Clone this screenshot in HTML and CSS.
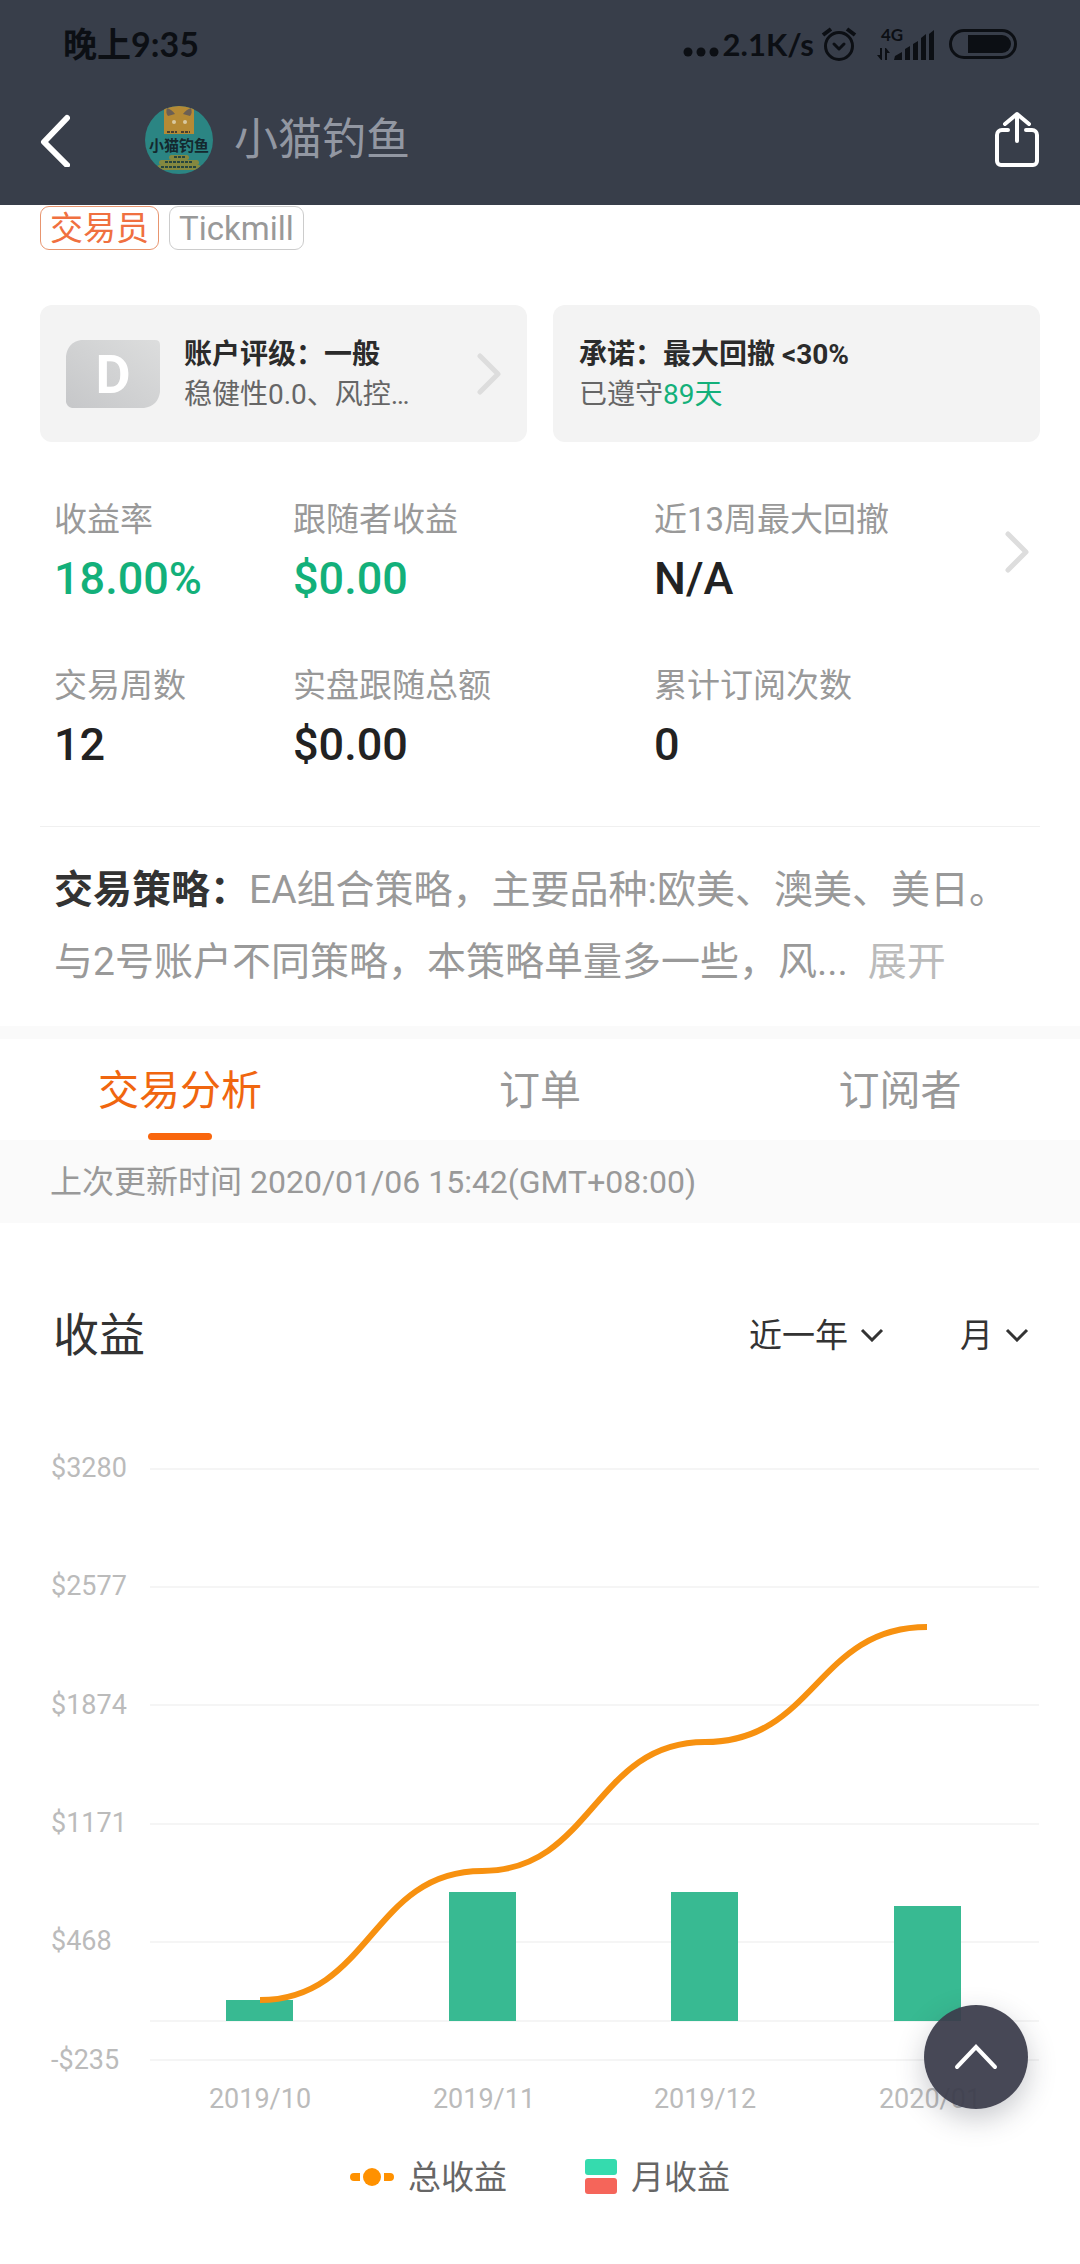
FILE: index.html
```html
<!DOCTYPE html>
<html lang="zh-CN">
<head>
<meta charset="utf-8">
<meta name="viewport" content="width=device-width, initial-scale=1">
<title>小猫钓鱼</title>
<link rel="stylesheet" href="styles.css">
</head>
<body>
<header class="top">
  <div class="status">
    <span class="status-time">晚上9:35</span>
    <div class="status-right">
      <svg class="icon" width="36" height="30" viewBox="0 0 36 30" aria-hidden="true"><g fill="#0c0f14"><circle cx="5" cy="23" r="4.5"/><circle cx="18" cy="23" r="4.5"/><circle cx="31" cy="23" r="4.5"/></g></svg>
      <span class="status-speed">2.1K/s</span>
      <svg class="icon" width="36" height="36" viewBox="0 0 36 36" fill="none" stroke="#0c0f14" aria-hidden="true"><circle cx="18" cy="20" r="13.5" stroke-width="3"/><path d="M13 18l5 5 5-5" stroke-width="3" stroke-linecap="round" stroke-linejoin="round"/><path d="M2 9l8-6M34 9l-8-6" stroke-width="4"/></svg>
      <svg class="icon icon-signal" width="58" height="44" viewBox="0 -5 58 44" aria-hidden="true"><g fill="#0c0f14"><text x="4" y="14" class="net">4G</text><path d="M3 21h2v12H4L0 28h3zM8 33V21h1l4 5h-3v7zM17 33l1-4 7-4v8zM28 33V22l5-3v14zM36 33V17l5-3v19zM44 33V11l5-4v26zM52 33V7l5-4v30z"/></g></svg>
      <svg class="icon icon-battery" width="68" height="32" viewBox="0 0 68 32" aria-hidden="true"><rect x="1.500" y="2.500" width="65" height="27" rx="13.500" fill="none" stroke="#0c0f14" stroke-width="3"/><path d="M19 7h34a9 9 0 0 1 0 18H19z" fill="#0c0f14"/></svg>
    </div>
  </div>
  <nav class="nav">
    <button class="icon-button" type="button" aria-label="返回"><svg width="30" height="54" viewBox="0 0 30 54" fill="none" stroke="#fff" stroke-width="6" stroke-linecap="round" stroke-linejoin="round" aria-hidden="true"><path d="M27 5L4 29l23 23"/></svg></button>
    <svg class="avatar" width="70" height="70" viewBox="0 0 70 70" aria-hidden="true">
      <defs><clipPath id="round"><circle cx="35" cy="35" r="34"/></clipPath></defs>
      <g clip-path="url(#round)">
        <rect width="70" height="70" fill="#2b8583"/>
        <path d="M20 0h30v29H20z" fill="#b58a35"/>
        <path d="M23 3c3 1 6 3 8 6l-7 2c-2-2-2-5-1-8zM47 3c-3 1-6 3-8 6l7 2c2-2 2-5 1-8z" fill="#6b5f54"/>
        <circle cx="30" cy="17" r="2" fill="#d8c9a0"/><circle cx="41" cy="17" r="2" fill="#d8c9a0"/>
        <path d="M23 27h10M37 27h9" stroke="#4a4030" stroke-width="2" stroke-dasharray="3 1"/>
        <rect x="25" y="50" width="20" height="5" rx="2.500" fill="#84883f"/><rect x="15" y="55" width="40" height="5" rx="2.500" fill="#84883f"/><rect x="13" y="60" width="44" height="5" rx="2.500" fill="#84883f"/>
        <path d="M30 52h11M21 57h28M17 62h36" stroke="#26463f" stroke-width="2" stroke-dasharray="3 1"/>
        <text x="35" y="46" text-anchor="middle" class="avatar-text">小猫钓鱼</text>
      </g>
    </svg>
    <h1 class="name">小猫钓鱼</h1>
    <button class="icon-button" type="button" aria-label="分享"><svg width="46" height="60" viewBox="0 0 46 60" fill="none" stroke="#fff" stroke-width="4" stroke-linecap="round" stroke-linejoin="round" aria-hidden="true"><path d="M14 20H8a5 5 0 0 0-5 5v26a4 4 0 0 0 4 4h32a4 4 0 0 0 4-4V25a5 5 0 0 0-5-5h-6M23 31V4M11 14L23 4l12 10"/></svg></button>
  </nav>
</header>
<main>
  <div class="tags"><span class="tag tag-hot">交易员</span><span class="tag">Tickmill</span></div>
  <div class="cards">
    <a class="card" href="#rating">
      <svg class="badge" width="96" height="70" viewBox="0 0 96 70" aria-hidden="true"><defs><linearGradient id="silver" x1="0" x2="1" y1="1" y2="0"><stop offset="0" stop-color="#c6c7c9"/><stop offset="1" stop-color="#dcdddd"/></linearGradient></defs><path d="M16 1h74q5 0 5 5v47q-2 14-16 16H7q-5-1-6-6V17Q3 3 16 1z" fill="url(#silver)"/><text x="48" y="54" text-anchor="middle" class="badge-text">D</text></svg>
      <span class="card-body"><strong class="card-title">账户评级：一般</strong><span class="card-note">稳健性0.0、风控…</span></span>
      <svg width="24" height="42" viewBox="0 0 24 42" class="chevron" aria-hidden="true"><path d="M3 3l18 18L3 39"/></svg>
    </a>
    <div class="card">
      <span class="card-body"><strong class="card-title">承诺：最大回撤 &lt;30%</strong><span class="card-note">已遵守<span class="green">89天</span></span></span>
    </div>
  </div>
  <section class="stats">
    <dl class="stats-grid">
      <div><dt>收益率</dt><dd class="green">18.00%</dd></div>
      <div><dt>跟随者收益</dt><dd class="green">$0.00</dd></div>
      <div><dt>近13周最大回撤</dt><dd>N/A</dd></div>
      <div><dt>交易周数</dt><dd>12</dd></div>
      <div><dt>实盘跟随总额</dt><dd>$0.00</dd></div>
      <div><dt>累计订阅次数</dt><dd>0</dd></div>
    </dl>
    <button class="icon-button stats-more" type="button" aria-label="更多数据"><svg width="24" height="42" viewBox="0 0 24 42" class="chevron" aria-hidden="true"><path d="M3 3l18 18L3 39"/></svg></button>
  </section>
  <p class="strategy"><strong>交易策略：</strong>EA组合策略，主要品种:欧美、澳美、美日。与2号账户不同策略，本策略单量多一些，风...<button class="expand" type="button">展开</button></p>
  <div class="tabs" role="tablist">
    <button class="tab tab-active" type="button" role="tab" aria-selected="true">交易分析</button>
    <button class="tab" type="button" role="tab" aria-selected="false">订单</button>
    <button class="tab" type="button" role="tab" aria-selected="false">订阅者</button>
  </div>
  <p class="updated">上次更新时间 2020/01/06 15:42(GMT+08:00)</p>
  <section class="income">
    <div class="income-head">
      <h2>收益</h2>
      <label class="filter"><select aria-label="时间范围"><option>近一年</option></select><svg width="24" height="14" viewBox="0 0 24 14" aria-hidden="true"><path d="M2 2l10 10L22 2"/></svg></label>
      <label class="filter"><select aria-label="统计周期"><option>月</option></select><svg width="24" height="14" viewBox="0 0 24 14" aria-hidden="true"><path d="M2 2l10 10L22 2"/></svg></label>
    </div>
    <svg class="chart" viewBox="0 0 1080 730" role="img" aria-label="总收益与月收益">
      <path class="grid-line" d="M150 69h889M150 187h889M150 305h889M150 424h889M150 542h889M150 621h889M150 660h889"/>
      <g class="axis">
        <text x="51" y="77">$3280</text><text x="51" y="195">$2577</text><text x="51" y="314">$1874</text><text x="51" y="432">$1171</text><text x="51" y="550">$468</text><text x="51" y="669">-$235</text>
      </g>
      <g class="axis axis-x">
        <text x="260" y="708">2019/10</text><text x="484" y="708">2019/11</text><text x="705" y="708">2019/12</text><text x="930" y="708">2020/01</text>
      </g>
      <g fill="#38ba92"><rect x="226" y="600" width="67" height="21"/><rect x="449" y="492" width="67" height="129"/><rect x="671" y="492" width="67" height="129"/><rect x="894" y="506" width="67" height="115"/></g>
      <path class="trend" d="M260 600C371 600 371 471 482 471S594 342 705 342S816 227 927 227"/>
    </svg>
    <div class="legend">
      <span class="legend-item"><svg width="44" height="18" viewBox="0 0 44 18" fill="#ff9100" aria-hidden="true"><path d="M4 5h6v8H4a4 4 0 0 1 0-8zM34 5h6a4 4 0 0 1 0 8h-6z"/><circle cx="22" cy="9" r="9"/></svg><span class="legend-label">总收益</span></span>
      <span class="legend-item"><svg width="32" height="36" viewBox="0 0 32 36" aria-hidden="true"><rect width="32" height="16" y="0" rx="3" fill="#35dbae"/><rect width="32" height="16" y="19" rx="3" fill="#f5655a"/></svg><span class="legend-label">月收益</span></span>
    </div>
  </section>
</main>
<button class="to-top" type="button" aria-label="回到顶部"><svg width="44" height="26" viewBox="0 0 44 26" fill="none" stroke="#fff" stroke-width="4" stroke-linecap="round" aria-hidden="true"><path d="M3 23L22 3l19 20"/></svg></button>
</body>
</html>
```
FILE: styles.css
```css
* {
  box-sizing: border-box;
}

body,
h1,
h2,
p,
dl,
dd {
  margin: 0;
}

body {
  background: #fff;
  color: #333;
  font-family: Roboto, "Noto Sans CJK SC", sans-serif;
  font-size: 33px;
}

button,
select {
  margin: 0;
  padding: 0;
  border: 0;
  background: none;
  color: inherit;
  font: inherit;
}

svg {
  display: block;
  flex: none;
}

.green {
  color: #13b07a;
}

.icon-button {
  display: flex;
}

/* Status bar and navigation */
.top {
  position: sticky;
  top: 0;
  background: #383e4a;
}

.status {
  display: flex;
  align-items: center;
  justify-content: space-between;
  height: 75px;
  padding: 13px 63px 0 63px;
  color: #0c0f14;
  font-family: Lato, "Noto Sans CJK SC", sans-serif;
  font-size: 34px;
  font-weight: 700;
}

.status-time {
  line-height: 40px;
}

.status-right {
  display: flex;
  align-items: center;
}

.status-speed {
  margin: 0 7px 0 4px;
  font-size: 31px;
}

.icon-signal {
  margin-left: 20px;
}

.icon-battery {
  margin-left: 14px;
}

.net {
  font-size: 17px;
}

.nav {
  display: flex;
  align-items: center;
  height: 130px;
  padding: 0 40px;
}

.avatar {
  margin-left: 74px;
}

.avatar-text {
  fill: #14282e;
  font-family: "Noto Sans CJK SC", sans-serif;
  font-size: 15px;
  font-weight: 700;
}

.name {
  flex: 1;
  margin-left: 20px;
  color: #9297a2;
  font-size: 44px;
  font-weight: 400;
  line-height: 60px;
}

/* Trader summary */
.tags {
  display: flex;
  gap: 10px;
  padding: 1px 40px 0;
}

.tag {
  height: 44px;
  padding: 0 9px;
  border: 1px solid #ccc;
  border-radius: 9px;
  color: #999;
  line-height: 44px;
}

.tag-hot {
  border-color: #e8956f;
  color: #f07040;
}

.cards {
  display: grid;
  grid-template-columns: 1fr 1fr;
  gap: 26px;
  padding: 55px 40px 0;
}

.card {
  display: flex;
  align-items: center;
  min-height: 137px;
  padding: 0 26px;
  border-radius: 12px;
  background: #f3f3f3;
  color: #666;
  font-size: 28px;
  line-height: 40px;
  text-decoration: none;
}

.badge {
  margin: 0 23px 0 -1px;
}

.badge-text {
  fill: #fff;
  font-size: 54px;
  font-weight: 700;
}

.card-body {
  flex: 1;
  padding-top: 3px;
}

.card-title,
.card-note {
  display: block;
}

.card-title {
  color: #2b2b2b;
}

.chevron {
  fill: none;
  stroke: #ddd;
  stroke-width: 5;
  stroke-linecap: round;
  stroke-linejoin: round;
}

.stats {
  display: flex;
  align-items: flex-start;
  margin: 0 40px;
  padding: 54px 11px 51px 14px;
  border-bottom: 1px solid #f0f0f0;
}

.stats-grid {
  display: grid;
  flex: 1;
  grid-template-columns: 239fr 361fr 351fr;
  row-gap: 53px;
}

.stats dt {
  color: #999;
  line-height: 48px;
}

.stats dd {
  margin-top: 5px;
  font-size: 45px;
  font-weight: 500;
  line-height: 60px;
}

.stats dd:not(.green) {
  color: #222;
}

.stats-more {
  margin-top: 35px;
}

.strategy {
  padding: 27px 40px 28px 54px;
  color: #999;
  font-size: 39px;
  line-height: 72px;
}

.strategy strong {
  color: #333;
}

.expand {
  margin-left: 20px;
  color: #bbb;
}

/* Tabs */
.tabs {
  display: grid;
  grid-template-columns: repeat(3, 1fr);
  border-top: 13px solid #fafafa;
}

.tab {
  display: flex;
  flex-direction: column;
  align-items: center;
  height: 101px;
  color: #999;
  font-size: 41px;
  line-height: 104px;
}

.tab-active {
  color: #f0660f;
}

.tab-active::after {
  content: "";
  width: 64px;
  height: 7px;
  margin-top: -10px;
  border-radius: 4px;
  background: #f9660d;
}

.updated {
  padding: 1px 50px 0;
  background: #fafafa;
  color: #999;
  font-size: 32px;
  line-height: 82px;
}

/* Income chart */
.income-head {
  display: flex;
  align-items: center;
  padding: 82px 51px 35px 53px;
}

.income-head h2 {
  flex: 1;
  font-size: 46px;
  font-weight: 400;
  line-height: 60px;
}

.filter {
  display: flex;
  align-items: center;
  gap: 12px;
  margin-left: 76px;
}

.filter select {
  appearance: none;
}

.filter path {
  fill: none;
  stroke: #333;
  stroke-width: 3;
}

.chart {
  width: 100%;
}

.grid-line {
  stroke: #f5f5f5;
  stroke-width: 2;
}

.axis {
  fill: #bbb;
  font-size: 27px;
}

.axis-x {
  text-anchor: middle;
}

.trend {
  fill: none;
  stroke: #f79110;
  stroke-width: 6;
}

.legend {
  display: flex;
  justify-content: center;
  gap: 78px;
  padding: 22px 0 60px;
  color: #666;
}

.legend-item {
  display: flex;
  align-items: center;
  gap: 14px;
}

.legend-label {
  padding-top: 2px;
  line-height: 48px;
}

.to-top {
  position: fixed;
  right: 52px;
  bottom: 155px;
  display: flex;
  align-items: center;
  justify-content: center;
  width: 104px;
  height: 104px;
  border-radius: 50%;
  background: rgba(60, 61, 75, 0.94);
  box-shadow: 0 10px 28px rgba(40, 44, 60, 0.25);
}
```
